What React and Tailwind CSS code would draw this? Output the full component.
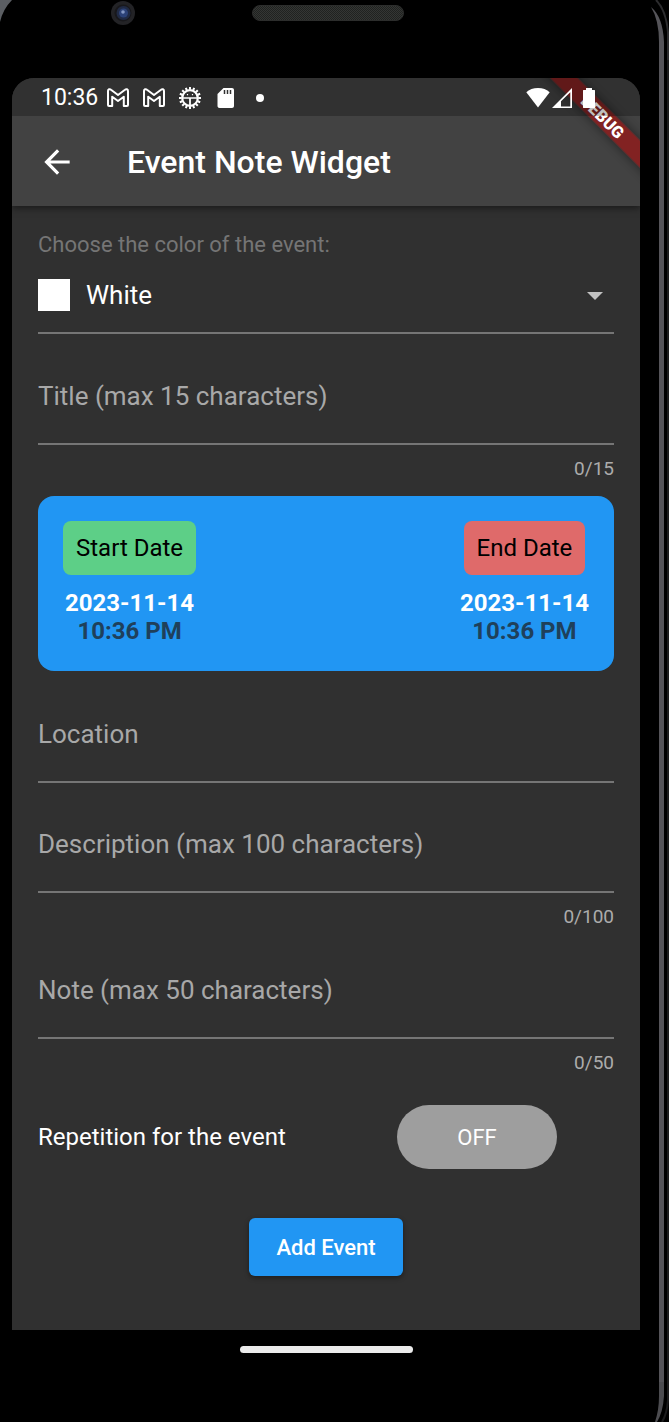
import { useState } from "react";

function GmailIcon() {
  return (
    <svg className="h-6 w-6" viewBox="0 0 24 24" fill="none" stroke="#fff" strokeWidth="2" strokeLinejoin="round" aria-hidden="true">
      <path d="M2 19V5c0-1.800 1.800-2.300 3-1.300L12 9l7-5.300c1.200-1 3-.5 3 1.300v14c0 .6-.4 1-1 1h-3.200v-9.300L12 15l-5.800-4.300V20H3c-.6 0-1-.4-1-1Z" />
    </svg>
  );
}

function GearIcon() {
  const teeth = Array.from({ length: 16 }, (_, i) => i * 22.5);
  return (
    <svg className="h-6 w-6" viewBox="0 0 24 24" fill="none" stroke="#fff" aria-hidden="true">
      <circle cx="12" cy="12" r="7.800" strokeWidth="2.200" />
      {teeth.map((a) => (
        <path key={a} d="M12 3.600V1" strokeWidth="2" transform={`rotate(${a} 12 12)`} />
      ))}
      <path d="M4.500 12h15" strokeWidth="1.300" />
      <path d="M12 12v8" strokeWidth="1.800" />
      <path d="M9.500 8v1.300M14.500 8v1.300" strokeWidth="1.200" />
    </svg>
  );
}

function SdIcon() {
  return (
    <svg className="h-6 w-6" viewBox="0 0 24 24" aria-hidden="true">
      <path fill="#fff" d="M18 2h-8.500L3.500 8v12c0 1.100.9 2 2 2H18c1.100 0 2-.9 2-2V4c0-1.100-.9-2-2-2Z" />
      <path stroke="#313131" strokeWidth="1.500" d="M10.500 4v4M13.500 4v4M16.500 4v4" />
    </svg>
  );
}

function StatusBar() {
  return (
    <div className="relative z-20 flex h-[38px] items-center bg-black/25 pl-[29px] pr-[39px] pt-0.5">
      <span className="text-[23px] leading-6">10:36</span>
      <div className="ml-2 flex items-center gap-3">
        <GmailIcon />
        <GmailIcon />
        <GearIcon />
        <SdIcon />
        <span className="ml-1.5 h-2 w-2 rounded-full bg-white" />
      </div>
      <div className="ml-auto flex items-center">
        <svg className="h-6 w-6" viewBox="0 0 24 24" fill="#fff" aria-hidden="true">
          <path d="M12 21.500 0.300 6.200C3 3.500 7.500 2 12 2s9 1.500 11.700 4.200Z" />
        </svg>
        <svg className="ml-0.5 h-6 w-6" viewBox="0 0 24 24" aria-hidden="true">
          <path fill="#fff" fillRule="evenodd" d="M0 22 20 2v20ZM9 15.300V20.500h9.300V6.300Z" />
        </svg>
        <svg className="ml-px h-6 w-6" viewBox="0 0 24 24" fill="#fff" aria-hidden="true">
          <path d="M9 2h6v2h2.500c.3 0 .5.200.5.500v17c0 .3-.2.500-.5.500h-11c-.3 0-.5-.2-.5-.5v-17c0-.3.2-.5.5-.5H9Z" />
        </svg>
      </div>
    </div>
  );
}

function DebugBanner() {
  return (
    <svg className="pointer-events-none absolute right-0 top-0 z-10 h-32 w-32" viewBox="-32 0 128 128" aria-hidden="true">
      <defs>
        <filter id="banner-shadow" x="-130" y="-50" width="260" height="100" filterUnits="userSpaceOnUse">
          <feDropShadow dx="0" dy="0" stdDeviation="6" floodColor="#000" floodOpacity="0.500" />
        </filter>
      </defs>
      <g transform="translate(58 38) rotate(45)">
        <rect x="-110" y="-9.500" width="220" height="19" fill="#822124" filter="url(#banner-shadow)" />
        <text x="1" y="6" textAnchor="middle" fontFamily="Roboto, sans-serif" fontSize="16.500" fontWeight="900" fill="#fff">DEBUG</text>
      </g>
    </svg>
  );
}

function Field({ id, label, max }) {
  const [value, setValue] = useState("");
  return (
    <div>
      <div className="grid h-24 border-b-2 border-[#757575]">
        <label htmlFor={id} className="col-start-1 row-start-1 self-center text-[26px] leading-8 text-[#a8a8a8]">
          {value ? "" : label}
        </label>
        <input
          id={id}
          value={value}
          maxLength={max}
          onChange={(e) => setValue(e.target.value)}
          className="col-start-1 row-start-1 w-full bg-transparent text-[26px] text-white outline-none"
        />
      </div>
      {max && <p className="mt-3 text-right text-[19px] leading-6 text-[#acacac]">{value.length}/{max}</p>}
    </div>
  );
}

function DateColumn({ label, tone }) {
  return (
    <div className="flex flex-col items-center">
      <button type="button" className={`h-[54px] rounded-lg px-[13px] text-2xl text-black ${tone}`}>{label}</button>
      <p className="mt-[14px] text-2xl font-bold leading-7 text-white">2023-11-14</p>
      <p className="text-2xl font-bold leading-7 text-[#1f405b]">10:36 PM</p>
    </div>
  );
}

function Bezel() {
  return (
    <div className="pointer-events-none absolute inset-0 overflow-hidden" aria-hidden="true">
      <svg className="absolute left-0 top-0 h-6 w-4" viewBox="0 0 16 24">
        <path d="M0 0h12Q3 9 0 22Z" fill="#5b5e63" />
      </svg>
      <svg className="absolute right-0 top-0 h-15 w-10" viewBox="0 0 40 60" fill="none">
        <path d="M22 7Q34 17 35 42V60H30V42Q30 20 22 7Z" fill="#555459" />
        <path d="M27 0Q37 10 39 32V60" stroke="#2c2c2e" strokeWidth="2" />
      </svg>
      <div className="absolute bottom-10 right-[5px] top-15 w-[5px] bg-[#555459]" />
      <div className="absolute bottom-10 right-0 top-15 w-0.5 bg-[#1c1c1d]" />
      <svg className="absolute bottom-0 right-0 h-10 w-10" viewBox="0 0 40 40" fill="none">
        <path d="M30 0h5v14Q34 30 28 40h-2Q30 28 30 14Z" fill="#4c4c50" />
        <path d="M39 0v18Q38 32 33 40" stroke="#1c1c1d" strokeWidth="2" />
      </svg>
    </div>
  );
}

function DeviceTop() {
  return (
    <div className="relative flex h-[78px] justify-center pl-1" aria-hidden="true">
      <svg className="absolute left-[99px] top-px h-6 w-6" viewBox="0 0 24 24">
        <circle cx="12" cy="12" r="12" fill="#232326" />
        <circle cx="12" cy="12" r="8.500" fill="#18181b" />
        <circle cx="12.500" cy="12" r="7" fill="#202a44" />
        <circle cx="12.500" cy="12" r="4.500" fill="#2c4278" />
        <circle cx="12" cy="11" r="1.800" fill="#8498c4" />
      </svg>
      <svg className="mt-[5px] h-4 w-[152px]" viewBox="0 0 152 16">
        <defs>
          <pattern id="mesh" width="2" height="2" patternUnits="userSpaceOnUse">
            <rect width="2" height="2" fill="#202220" />
            <path d="M0 0h1v1H0ZM1 1h1v1H1Z" fill="#343634" />
          </pattern>
        </defs>
        <rect x="0.500" y="0.500" width="151" height="15" rx="7.500" fill="url(#mesh)" stroke="#2c2d2c" />
      </svg>
    </div>
  );
}

export default function App() {
  const [on, setOn] = useState(false);
  return (
    <div className="relative min-h-screen overflow-hidden bg-black pl-3 pr-[29px] font-[Roboto,sans-serif] text-white">
      <Bezel />
      <DeviceTop />
      <main className="relative overflow-hidden rounded-t-[22px] bg-[#303030]">
        <DebugBanner />
        <header className="relative bg-[#424242] shadow-[0_2px_7px_rgba(0,0,0,0.5)]">
          <StatusBar />
          <div className="flex h-[90px] items-center pl-[26px] pt-0.5">
            <button type="button" aria-label="Back">
              <svg className="h-[38px] w-[38px]" viewBox="0 0 24 24" fill="#fff" aria-hidden="true">
                <path d="M20 11H7.830l5.590-5.590L12 4l-8 8 8 8 1.410-1.410L7.830 13H20v-2Z" />
              </svg>
            </button>
            <h1 className="ml-[51px] text-[32px] font-medium leading-10">Event Note Widget</h1>
          </div>
        </header>
        <form className="px-[26px] pb-[54px] pt-[25px]" onSubmit={(e) => e.preventDefault()}>
          <label htmlFor="color" className="block text-[22px] leading-7 text-[#757575]">Choose the color of the event:</label>
          <div className="relative mt-[11px] flex h-16 items-center border-b-2 border-[#757575] pb-3">
            <span className="h-8 w-8 shrink-0 bg-white" />
            <select id="color" className="h-10 w-full appearance-none bg-transparent pl-4 text-[26px] text-white outline-none">
              <option>White</option>
            </select>
            <svg className="pointer-events-none absolute right-[11px] top-[22px] h-2 w-4" viewBox="0 0 16 8" fill="#c1c1c1" aria-hidden="true">
              <path d="M0 0h16L8 8Z" />
            </svg>
          </div>
          <div className="mt-[15px]"><Field id="title" label="Title (max 15 characters)" max={15} /></div>
          <section className="mt-[15px] flex justify-between rounded-[16px] bg-[#2196f3] px-[25px] pb-[26px] pt-[25px]">
            <DateColumn label="Start Date" tone="bg-[#5dcf87]" />
            <DateColumn label="End Date" tone="bg-[#df6a6a]" />
          </section>
          <div className="mt-4"><Field id="location" label="Location" /></div>
          <div className="mt-[14px]"><Field id="description" label="Description (max 100 characters)" max={100} /></div>
          <div className="mt-[14px]"><Field id="note" label="Note (max 50 characters)" max={50} /></div>
          <div className="mt-[30px] flex items-center justify-between pr-[57px]">
            <span id="rep" className="text-2xl">Repetition for the event</span>
            <button type="button" aria-labelledby="rep" aria-pressed={on} onClick={() => setOn(!on)} className="h-16 w-40 rounded-full bg-[#9e9e9e] text-[22px]">{on ? "ON" : "OFF"}</button>
          </div>
          <button type="submit" className="mx-auto mt-[49px] block h-[58px] rounded-md bg-[#2196f3] px-[27px] text-[22px] font-medium shadow-[0_2px_5px_rgba(0,0,0,0.4)]">Add Event</button>
        </form>
      </main>
      <div className="mx-auto mt-4 h-[7px] w-[173px] rounded-full bg-[#ebebeb]" />
    </div>
  );
}
